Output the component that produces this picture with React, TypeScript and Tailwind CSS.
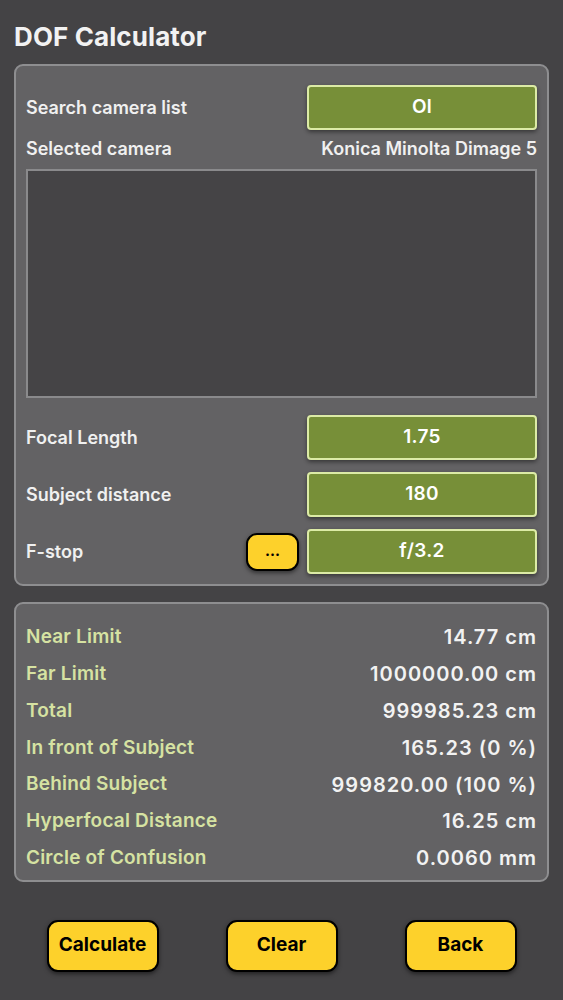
import type { ReactNode } from "react";

const results: [string, string][] = [
  ["Near Limit", "14.77 cm"],
  ["Far Limit", "1000000.00 cm"],
  ["Total", "999985.23 cm"],
  ["In front of Subject", "165.23 (0 %)"],
  ["Behind Subject", "999820.00 (100 %)"],
  ["Hyperfocal Distance", "16.25 cm"],
  ["Circle of Confusion", "0.0060 mm"],
];

function GreenField({ children }: { children: ReactNode }) {
  return (
    <button className="w-[230px] h-[45px] shrink-0 rounded-[4px] border-2 border-[#dcebA6] bg-[#778f38] text-white text-[19px] font-semibold tracking-[0.3px] shadow-[0_2px_4px_rgba(0,0,0,0.45)]">
      {children}
    </button>
  );
}

function InputRow({ label, children }: { label: string; children: ReactNode }) {
  return (
    <div className="flex items-center justify-between">
      <span className="text-[18px] font-semibold text-[#f0f0f0]">{label}</span>
      <div className="flex items-center gap-[8px]">{children}</div>
    </div>
  );
}

function YellowButton({ children, className }: { children: ReactNode; className: string }) {
  return (
    <button
      className={
        "rounded-[11px] border-2 border-black bg-[#fdd12b] text-black font-bold shadow-[0_2px_4px_rgba(0,0,0,0.5)] " +
        className
      }
    >
      {children}
    </button>
  );
}

export default function App() {
  return (
    <div
      className="w-[563px] h-[1000px] bg-[#444345] px-[14px] pt-[22px] flex flex-col"
      style={{ fontFamily: "Inter, 'Noto Sans', sans-serif" }}
    >
      <h1 className="text-[26px] leading-[30px] font-bold tracking-[0.1px] text-[#f2f2f2]">DOF Calculator</h1>

      <section className="mt-[12px] rounded-[9px] border-2 border-[#8e8e90] bg-[#636264] px-[10px] pt-[19px] pb-[10px] flex flex-col">
        <InputRow label="Search camera list">
          <GreenField>Ol</GreenField>
        </InputRow>
        <div className="h-[39px] pb-[3px] flex items-center justify-between text-[18px] font-semibold text-[#f0f0f0]">
          <span>Selected camera</span>
          <span>Konica Minolta Dimage 5</span>
        </div>
        <div className="h-[229px] border-2 border-[#8a8a8c] bg-[#454446]" />
        <div className="mt-[17px] flex flex-col gap-[12px]">
          <InputRow label="Focal Length">
            <GreenField>1.75</GreenField>
          </InputRow>
          <InputRow label="Subject distance">
            <GreenField>180</GreenField>
          </InputRow>
          <InputRow label="F-stop">
            <YellowButton className="w-[53px] h-[38px] rounded-[9px] text-[15px] leading-none pb-[2px]">...</YellowButton>
            <GreenField>f/3.2</GreenField>
          </InputRow>
        </div>
      </section>

      <section className="mt-[16px] rounded-[9px] border-2 border-[#8e8e90] bg-[#636264] px-[10px] pt-[15px] pb-[3px] flex flex-col">
        {results.map(([label, value]) => (
          <div key={label} className="h-[36.8px] flex items-center justify-between text-[19px] font-semibold">
            <span className="text-[#d6e2a2] tracking-[0.2px]">{label}</span>
            <span className="text-[#f2f2f2] text-[20px] tracking-[1px]">{value}</span>
          </div>
        ))}
      </section>

      <div className="mt-[38px] flex justify-center gap-[67px]">
        <YellowButton className="w-[112px] h-[52px] text-[19px]">Calculate</YellowButton>
        <YellowButton className="w-[112px] h-[52px] text-[19px]">Clear</YellowButton>
        <YellowButton className="w-[112px] h-[52px] text-[19px]">Back</YellowButton>
      </div>
    </div>
  );
}
